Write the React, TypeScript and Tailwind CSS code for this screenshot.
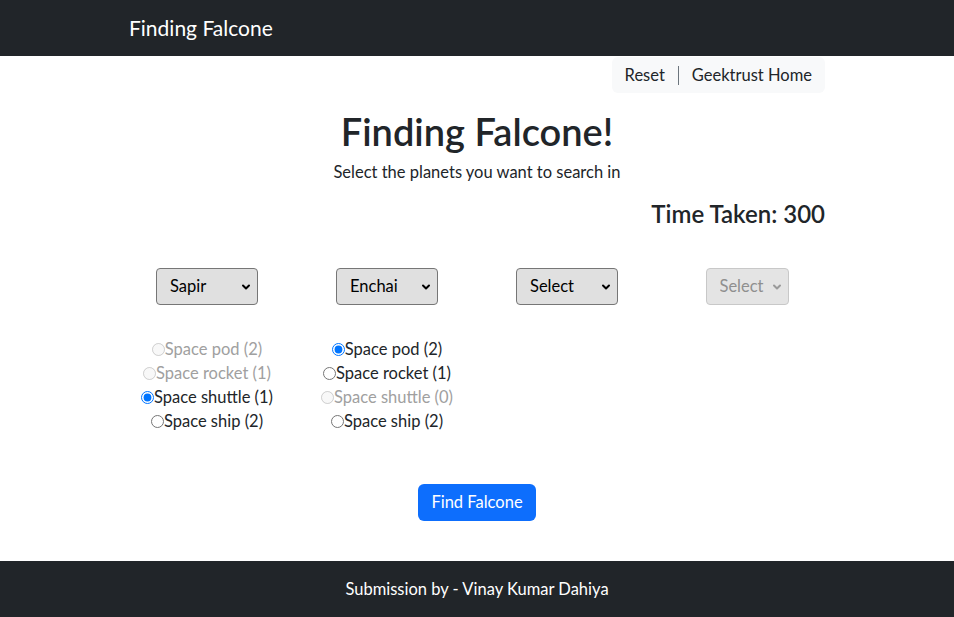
import { useState } from 'react'

const FONT = { fontFamily: 'Lato, "Noto Sans", sans-serif' }

type Vehicle = { name: string; count: number; disabled: boolean }

const COLUMNS: { planet: string; disabled?: boolean; vehicles: Vehicle[]; picked?: number }[] = [
  {
    planet: 'Sapir',
    picked: 2,
    vehicles: [
      { name: 'Space pod', count: 2, disabled: true },
      { name: 'Space rocket', count: 1, disabled: true },
      { name: 'Space shuttle', count: 1, disabled: false },
      { name: 'Space ship', count: 2, disabled: false },
    ],
  },
  {
    planet: 'Enchai',
    picked: 0,
    vehicles: [
      { name: 'Space pod', count: 2, disabled: false },
      { name: 'Space rocket', count: 1, disabled: false },
      { name: 'Space shuttle', count: 0, disabled: true },
      { name: 'Space ship', count: 2, disabled: false },
    ],
  },
  { planet: 'Select', vehicles: [] },
  { planet: 'Select', disabled: true, vehicles: [] },
]

function PlanetSelect({ value, disabled }: { value: string; disabled?: boolean }) {
  return (
    <div className="relative inline-block">
      <select
        defaultValue={value}
        disabled={disabled}
        className={`appearance-none h-[37px] rounded-[4px] border text-[16.5px] pl-[13px] pr-6 text-left ${
          disabled
            ? 'w-[83px] bg-[#e4e4e4] border-[#c8c8c8] text-[#8f8f8f]'
            : 'w-[102px] bg-[#e0e0e0] border-[#767676] text-black'
        }`}
      >
        <option>{value}</option>
      </select>
      {/* chevron */}
      <svg
        className={`absolute right-[7px] top-[14px] w-[10px] h-[10px] pointer-events-none ${disabled ? 'text-[#9a9a9a]' : 'text-black'}`}
        viewBox="0 0 10 10"
        fill="none"
        stroke="currentColor"
        strokeWidth={2}
      >
        <path d="M2 3.5l3 3 3-3" strokeLinecap="round" strokeLinejoin="round" />
      </svg>
    </div>
  )
}

export default function App() {
  const [picks, setPicks] = useState<(number | undefined)[]>(COLUMNS.map((c) => c.picked))

  return (
    <div className="min-h-screen flex flex-col bg-white text-[#212529]" style={FONT}>
      {/* Navbar */}
      <nav className="h-14 bg-[#212529]">
        <div className="w-[720px] mx-auto px-3 h-full flex items-center">
          <span className="text-[21px] text-white">Finding Falcone</span>
        </div>
      </nav>

      <main className="flex-1">
        <div className="w-[720px] mx-auto px-3">
          {/* Top actions */}
          <div className="flex justify-end pt-px">
            <div className="flex items-center bg-[#f8f9fa] rounded-[6px]">
              <button className="h-9 px-[13px] text-[16.5px]">Reset</button>
              <span className="w-px h-[19px] bg-[#6c757d]" />
              <button className="h-9 px-[13px] text-[16.5px]">Geektrust Home</button>
            </div>
          </div>

          <h1 className="mt-[17px] mb-[7px] text-center text-[38px] leading-[43px] font-semibold">Finding Falcone!</h1>
          <p className="text-center text-[16.5px] leading-6">Select the planets you want to search in</p>
          <h4 className="mt-[15px] text-right text-[24px] leading-[29px] font-semibold">Time Taken: 300</h4>

          {/* Planet selects */}
          <div className="-mx-3 mt-10 grid grid-cols-4">
            {COLUMNS.map((c, i) => (
              <div key={i} className="flex justify-center">
                <PlanetSelect value={c.planet} disabled={c.disabled} />
              </div>
            ))}
          </div>

          {/* Vehicles */}
          <div className="-mx-3 mt-8 grid grid-cols-4 min-h-24">
            {COLUMNS.map((c, i) => (
              <div key={i} className="flex flex-col items-center">
                {c.vehicles.map((v, j) => (
                  <label
                    key={v.name}
                    className={`flex items-center leading-6 text-[16.5px] ${v.disabled ? 'text-[#a0a0a0]' : ''}`}
                  >
                    <input
                      type="radio"
                      name={`vehicle-${i}`}
                      className="m-0 w-[13px] h-[13px]"
                      disabled={v.disabled}
                      checked={picks[i] === j}
                      onChange={() => setPicks((p) => p.map((x, k) => (k === i ? j : x)))}
                    />
                    {v.name} ({v.count})
                  </label>
                ))}
              </div>
            ))}
          </div>

          <div className="mt-[51px] mb-10 flex justify-center">
            <button className="h-[37px] px-[13px] rounded-[6px] bg-[#0d6efd] text-white text-[16.5px]">Find Falcone</button>
          </div>
        </div>
      </main>

      <footer className="h-14 bg-[#212529] flex items-center justify-center text-white text-[16.5px]">
        Submission by - Vinay Kumar Dahiya
      </footer>
    </div>
  )
}
